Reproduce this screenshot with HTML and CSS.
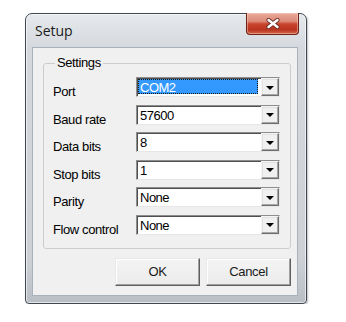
FILE: index.html
```html
<!DOCTYPE html>
<html>
<head>
<meta charset="utf-8">
<title>Setup</title>
<link rel="stylesheet" href="styles.css">
</head>
<body>
<div class="window">
  <div class="titlebar">
    <span class="title">Setup</span>
    <div class="close">
      <svg width="14" height="11" viewBox="0 0 14 11">
        <path d="M2.5 2 L11.5 9 M11.5 2 L2.5 9" stroke="#6a3026" stroke-width="4.2" stroke-linecap="round" fill="none"/>
        <path d="M2.5 2 L11.5 9 M11.5 2 L2.5 9" stroke="#ffffff" stroke-width="2.4" stroke-linecap="round" fill="none"/>
      </svg>
    </div>
  </div>
  <div class="client">
    <fieldset class="group">
      <legend>Settings</legend>
      <div class="row"><span class="label">Port</span><div class="combo"><span class="value focused">COM2</span><span class="drop"></span></div></div>
      <div class="row"><span class="label">Baud rate</span><div class="combo"><span class="value">57600</span><span class="drop"></span></div></div>
      <div class="row"><span class="label">Data bits</span><div class="combo"><span class="value">8</span><span class="drop"></span></div></div>
      <div class="row"><span class="label">Stop bits</span><div class="combo"><span class="value">1</span><span class="drop"></span></div></div>
      <div class="row"><span class="label">Parity</span><div class="combo"><span class="value">None</span><span class="drop"></span></div></div>
      <div class="row"><span class="label">Flow control</span><div class="combo"><span class="value">None</span><span class="drop"></span></div></div>
    </fieldset>
    <div class="buttons">
      <div class="btn">OK</div>
      <div class="btn">Cancel</div>
    </div>
  </div>
</div>
</body>
</html>
```

FILE: styles.css
```css
* { box-sizing: border-box; }

body {
  margin: 0;
  background: #ffffff;
  font-family: "Liberation Sans", Arial, sans-serif;
  color: #000;
}

.window {
  margin: 13px 0 0 25px;
  width: 282px;
  height: 291px;
  border: 1px solid #3f4852;
  border-radius: 7px 7px 4px 4px;
  background: linear-gradient(#e6e9ec, #d5d9de 34px, #cdd1d6 85%, #b9bec4);
  box-shadow: inset 0 0 0 1px rgba(255,255,255,0.6), 1px 1px 2px rgba(0,0,0,0.25);
  padding: 0 8px 7px 6px;
  display: flex;
  flex-direction: column;
}

.titlebar {
  height: 33px;
  display: flex;
  align-items: flex-start;
  justify-content: space-between;
}

.title {
  margin: 7px 0 0 3px;
  font-family: "Open Sans", "Noto Sans", sans-serif;
  font-size: 14px;
  line-height: 20px;
  color: #1b1b1b;
}

.close {
  width: 53px;
  height: 22px;
  margin: -1px -1px 0 0;
  border: 1px solid #6b2318;
  border-top: none;
  border-radius: 0 0 4px 4px;
  background: linear-gradient(#e8aa9c 0%, #dc8a77 40%, #c9452d 52%, #b93420 80%, #d5684a 100%);
  box-shadow: inset 0 0 0 1px rgba(255,215,200,0.45);
  display: flex;
  align-items: center;
  justify-content: center;
}

.client {
  flex: 1;
  background: #f0f0f0;
  border: 1px solid #a9b1ba;
  padding: 8px 6px 0 10px;
  display: flex;
  flex-direction: column;
}

.group {
  margin: 0;
  min-width: 0;
  border: 1px solid #cdcdcd;
  border-radius: 3px;
  padding: 7px 10px 13px 9px;
  display: flex;
  flex-direction: column;
  gap: 7.5px;
}

.group legend {
  margin-left: 2px;
  padding: 0 2px;
  font-size: 13px;
  line-height: 14px;
  letter-spacing: -0.4px;
}

.row {
  display: flex;
  justify-content: space-between;
  height: 20px;
}

.label {
  padding-top: 5px;
  font-size: 13px;
  line-height: 20px;
  letter-spacing: -0.4px;
  white-space: nowrap;
}

.combo {
  width: 144px;
  height: 20px;
  display: flex;
  background: #ffffff;
  border: 1px solid;
  border-color: #8d8d8d #e6e6e6 #e6e6e6 #8d8d8d;
  box-shadow: inset 1px 1px 0 #505050;
}

.value {
  flex: 1;
  padding: 2px 0 0 3px;
  font-size: 13px;
  line-height: 16px;
  letter-spacing: -0.5px;
  white-space: nowrap;
}

.value.focused {
  margin: 1px 3px 2px 1px;
  padding: 1px 0 0 2px;
  background: #3399ff;
  color: #ffffff;
  outline: 1px dotted #1a1a1a;
  outline-offset: -1px;
}

.drop {
  width: 18px;
  height: 18px;
  background: #f0f0f0;
  border: 1px solid;
  border-color: #f4f4f4 #6e6e6e #6e6e6e #f4f4f4;
  box-shadow: inset -1px -1px 0 #a6a6a6, inset 1px 1px 0 #e3e3e3;
  display: flex;
  align-items: center;
  justify-content: center;
}

.drop::after {
  content: "";
  width: 0;
  height: 0;
  margin-top: 1px;
  border-top: 4px solid #000;
  border-left: 4px solid transparent;
  border-right: 4px solid transparent;
}

.buttons {
  display: flex;
  justify-content: flex-end;
  gap: 6px;
  margin-top: 9px;
}

.btn {
  width: 85px;
  height: 28px;
  background: linear-gradient(#f4f4f4, #ebebeb);
  border: 1px solid;
  border-color: #e8e8e8 #5f5f5f #5f5f5f #e8e8e8;
  box-shadow: inset -1px -1px 0 #a0a0a0, inset 1px 1px 0 #ffffff;
  display: flex;
  align-items: center;
  justify-content: center;
  font-size: 13px;
  letter-spacing: -0.3px;
  color: #1a1a1a;
}
```
